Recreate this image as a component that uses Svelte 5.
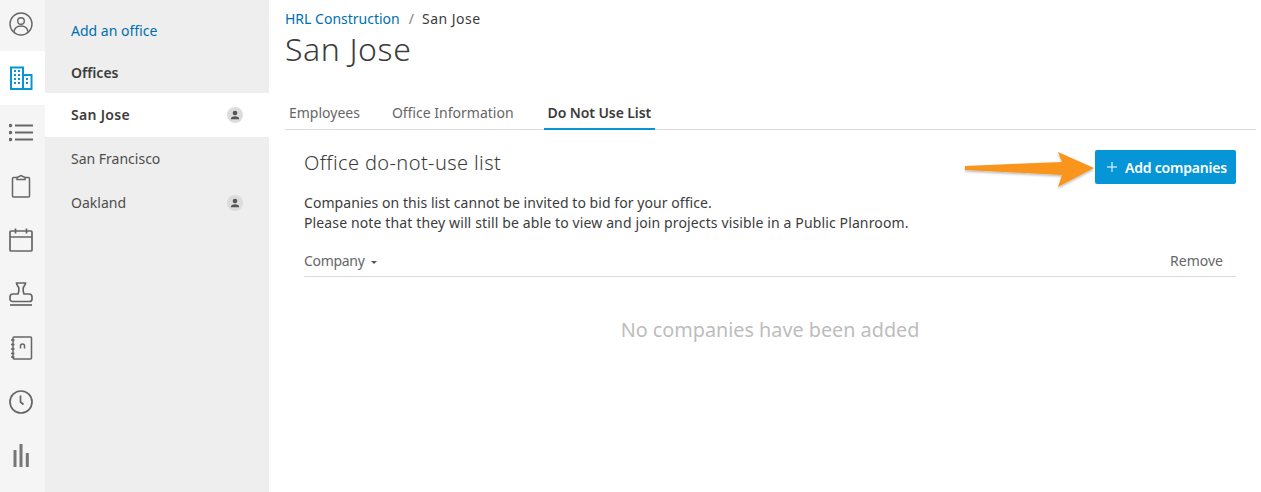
<script>
	const offices = [
		{ name: "San Jose", active: true, person: true },
		{ name: "San Francisco", active: false, person: false },
		{ name: "Oakland", active: false, person: true }
	];
	const tabs = ["Employees", "Office Information", "Do Not Use List"];
	const windows = [[5, 4], [9, 4], [5, 8], [9, 8], [5, 12], [9, 12], [5, 16], [9, 16], [17, 12], [17, 16]];
</script>

<div class="page">
	<nav class="rail">
		<div class="rail-item">
			<svg viewBox="0 0 24 24" width="24" height="24" fill="none" stroke="#666" stroke-width="1.4">
				<circle cx="12" cy="12" r="11" />
				<circle cx="12" cy="9" r="3.3" />
				<path d="M5 20c.4-3.600 3-6 7-6s6.600 2.400 7 6" />
			</svg>
		</div>
		<div class="rail-item on">
			<svg viewBox="0 0 24 24" width="24" height="24" fill="none" stroke="#0696d7" stroke-width="2">
				<path d="M2 23V1.500h12V23zM14 9h8.500V23H14" />
				{#each windows as w}
					<rect x={w[0]} y={w[1]} width="2" height="2" fill="#0696d7" stroke="none" />
				{/each}
			</svg>
		</div>
		<div class="rail-item">
			<svg viewBox="0 0 24 24" width="24" height="24" fill="none" stroke="#666" stroke-width="2">
				<path d="M6 5.500h18M6 12.500h18M6 19.500h18" />
				<circle cx="1.500" cy="5.500" r=".8" />
				<circle cx="1.500" cy="12.500" r=".8" />
				<circle cx="1.500" cy="19.500" r=".8" />
			</svg>
		</div>
		<div class="rail-item">
			<svg viewBox="0 0 24 24" width="24" height="24" fill="none" stroke="#666" stroke-width="1.5">
				<path d="M8 3.500H4.500a1 1 0 0 0-1 1V22a1 1 0 0 0 1 1h15a1 1 0 0 0 1-1V4.500a1 1 0 0 0-1-1H16" />
				<path d="M8 5.500V3.500L12 1.500l4 2v2z" />
			</svg>
		</div>
		<div class="rail-item">
			<svg viewBox="0 0 24 24" width="24" height="24" fill="none" stroke="#666" stroke-width="1.700">
				<rect x="1" y="3" width="22" height="20" rx="1" />
				<path d="M1 9h22M6.500 .5v5M17.500 .5v5" />
			</svg>
		</div>
		<div class="rail-item">
			<svg viewBox="0 0 24 24" width="24" height="24" fill="none" stroke="#666" stroke-width="1.700">
				<path d="M7.500 1h9c0 2-2 3-2.300 5-.3 2-.2 4 .8 6h5a3 3 0 0 1 3 3v2a2.500 2.500 0 0 1-2.500 2.500H3.500A2.500 2.500 0 0 1 1 17v-2a3 3 0 0 1 3-3h5c1-2 1.100-4 .8-6C9.500 4 7.500 3 7.500 1z" />
				<path d="M1 23h22" />
			</svg>
		</div>
		<div class="rail-item">
			<svg viewBox="0 0 24 24" width="24" height="24" fill="none" stroke="#666" stroke-width="1.500">
				<rect x="4" y="1" width="18.500" height="22" rx="1" />
				<path d="M2 4h3.500M2 8.500h3.500M2 13h3.500M2 17.500h3.500M2 21h3.500" stroke-width="1.700" />
				<path d="M11.500 12.500v-2.500a2 2 0 0 1 4 0v2.500" stroke-width="1.500" />
			</svg>
		</div>
		<div class="rail-item">
			<svg viewBox="0 0 24 24" width="24" height="24" fill="none" stroke="#666" stroke-width="1.700">
				<circle cx="12" cy="12" r="11" />
				<path d="M11.500 5.500v6.500l3 2.500" />
			</svg>
		</div>
		<div class="rail-item">
			<svg viewBox="0 0 24 24" width="24" height="24" fill="none" stroke="#777" stroke-width="3">
				<path d="M6 6v17M12 0V23M18.300 9v14" />
			</svg>
		</div>
	</nav>

	<aside class="side">
		<a class="add">Add an office</a>
		<div class="head">Offices</div>
		{#each offices as o}
			<div class="office" class:active={o.active}>
				<span class="name">{o.name}</span>
				{#if o.person}
					<span class="badge">
						<svg viewBox="0 0 16 16" width="16" height="16" fill="#555">
							<circle cx="8" cy="6" r="2.300" />
							<path d="M3.800 12.200c0-2.200 2-3 4.200-3s4.200.8 4.200 3z" />
						</svg>
					</span>
				{/if}
			</div>
		{/each}
	</aside>

	<main class="main">
		<div class="crumbs">
			<a>HRL Construction</a><span class="sep">/</span><span class="here">San Jose</span>
		</div>
		<h1>San Jose</h1>
		<div class="tabs">
			{#each tabs as t, i}
				<div class="tab" class:current={i === 2}>{t}</div>
			{/each}
		</div>
		<section class="panel">
			<div class="panel-top">
				<h2>Office do-not-use list</h2>
				<button>
					<svg viewBox="0 0 12 12" width="12" height="12" stroke="#fff" stroke-width="1"><path d="M6 1v10M1 6h10" /></svg>
					Add companies
				</button>
			</div>
			<p><span class="tight">Companies on this list cannot be invited to bid for your office.</span><br />Please note that they will still be able to view and join projects visible in a Public Planroom.</p>
			<div class="thead">
				<span class="sort">Company <i class="caret"></i></span>
				<span class="remove">Remove</span>
			</div>
			<div class="empty">No companies have been added</div>
		</section>
	</main>

	<svg class="arrow" viewBox="0 0 132 40" width="132" height="40">
		<defs>
			<filter id="sh" x="-10%" y="-20%" width="120%" height="150%">
				<feDropShadow dx="0" dy="1.500" stdDeviation="1.200" flood-color="#000" flood-opacity=".28" />
			</filter>
		</defs>
		<path filter="url(#sh)" fill="#f9951e" d="M1 16 98 12 94 2 130 18 94 37 98 25 1 20z" />
	</svg>
</div>

<style>
	:global(body) {
		margin: 0;
		background: #fff;
	}
	.page {
		position: relative;
		display: flex;
		height: 492px;
		overflow: hidden;
		font-family: "Noto Sans", sans-serif;
		font-size: 14px;
		color: #3c3c3c;
	}
	.rail {
		width: 45px;
		flex: none;
		background: #f5f5f5;
		margin-top: -3px;
	}
	.rail-item {
		height: 54px;
		display: flex;
		align-items: center;
		justify-content: center;
		padding-right: 3px;
		box-sizing: border-box;
	}
	.rail-item.on {
		background: #fff;
	}
	.side {
		width: 224px;
		flex: none;
		background: #eee;
		padding-top: 9px;
	}
	.add {
		display: block;
		color: #006eaf;
		line-height: 44px;
		padding-left: 26px;
		height: 44px;
	}
	.head {
		font-weight: 600;
		height: 40px;
		line-height: 40px;
		padding-left: 26px;
	}
	.office {
		height: 44px;
		display: flex;
		align-items: center;
		justify-content: space-between;
		padding: 0 26px;
		color: #4d4d4d;
	}
	.name {
		margin-bottom: 2px;
	}
	.office.active {
		background: #fff;
		font-weight: 600;
		color: #3c3c3c;
		letter-spacing: .3px;
	}
	.badge {
		width: 16px;
		height: 16px;
		border-radius: 50%;
		background: #dcdcdc;
		display: flex;
	}
	.main {
		flex: 1;
		padding: 9px 5px 0 16px;
		min-width: 0;
	}
	.crumbs {
		line-height: 20px;
	}
	.crumbs a {
		color: #006eaf;
	}
	.sep {
		margin: 0 8px 0 9px;
		color: #808080;
	}
	.here {
		letter-spacing: .5px;
	}
	h1 {
		font-weight: 300;
		font-size: 32px;
		letter-spacing: .6px;
		line-height: 40px;
		margin: 0;
		height: 56px;
	}
	.tabs {
		display: flex;
		gap: 24px;
		border-bottom: 1px solid #d9d9d9;
		height: 44px;
	}
	.tab {
		padding: 16px 4px 0;
		line-height: 24px;
		height: 45px;
		box-sizing: border-box;
		color: #666;
	}
	.tab.current {
		font-weight: 600;
		color: #3c3c3c;
		letter-spacing: -.1px;
		margin-left: 2px;
		border-bottom: 2px solid #0696d7;
	}
	.panel {
		margin-left: 19px;
		margin-right: 20px;
	}
	.panel-top {
		display: flex;
		justify-content: space-between;
		align-items: flex-start;
		padding-top: 20px;
	}
	h2 {
		margin: 0;
		font-weight: 300;
		font-size: 20px;
		letter-spacing: .4px;
		line-height: 26px;
	}
	button {
		background: #0696d7;
		border: 0;
		border-radius: 2px;
		color: #fff;
		font: 600 14px "Noto Sans", sans-serif;
		letter-spacing: -.2px;
		height: 34px;
		width: 141px;
		display: flex;
		align-items: center;
		gap: 7px;
		padding: 0 0 0 11px;
	}
	p {
		margin: 9px 0 0;
		line-height: 20px;
		font-size: 14px;
		letter-spacing: .13px;
	}
	.tight {
		letter-spacing: .06px;
	}
	.thead {
		display: flex;
		justify-content: space-between;
		align-items: flex-start;
		height: 31px;
		margin-top: 12px;
		padding-top: 0;
		line-height: 32px;
		border-bottom: 1px solid #d9d9d9;
		color: #666;
	}
	.sort {
		letter-spacing: -.3px;
	}
	.remove {
		padding-right: 13px;
	}
	.caret {
		display: inline-block;
		border: 3px solid transparent;
		border-top: 3.500px solid #555;
		border-bottom: 0;
		margin-left: 3px;
		vertical-align: middle;
	}
	.empty {
		text-align: center;
		color: #bdbdbd;
		font-size: 19.800px;
		margin-top: 39px;
		line-height: 28px;
	}
	.arrow {
		position: absolute;
		left: 964px;
		top: 150px;
	}
</style>
